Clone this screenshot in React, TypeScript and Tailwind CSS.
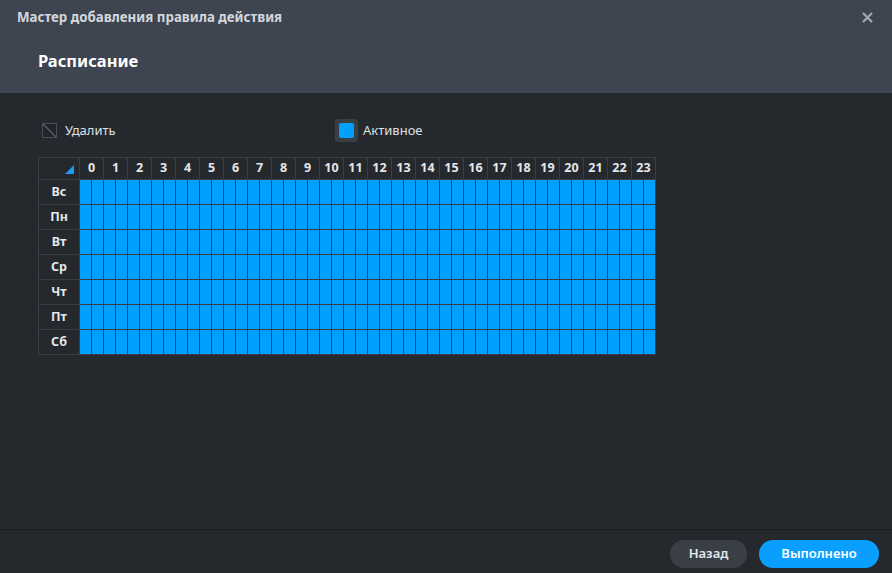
import React from "react"

const days = ["Вс", "Пн", "Вт", "Ср", "Чт", "Пт", "Сб"]
const hours = Array.from({ length: 24 }, (_, i) => i)
const halves = Array.from({ length: 48 }, (_, i) => i)

function ScheduleGrid() {
  return (
    <div className="grid grid-cols-[40px_repeat(48,11px)] gap-px bg-[#393d44] p-px w-max">
      <div className="h-[21px] bg-[#25282d] flex items-end justify-end pr-[5px] pb-[5px]">
        <svg width="9" height="9" viewBox="0 0 9 9">
          <polygon points="9,0 9,9 0,9" fill="#1a9cf0" />
        </svg>
      </div>
      {hours.map((h) => (
        <div
          key={h}
          className="col-span-2 h-[21px] bg-[#25282d] flex items-center justify-center text-[12.5px] font-bold text-[#e4e7eb]"
        >
          {h}
        </div>
      ))}
      {days.map((d) => (
        <React.Fragment key={d}>
          <div className="h-[24px] bg-[#25282d] flex items-center justify-center text-[12.5px] font-bold text-[#e4e7eb]">
            {d}
          </div>
          {halves.map((i) => (
            <div key={i} className="h-[24px] bg-[#00a0ff]" />
          ))}
        </React.Fragment>
      ))}
    </div>
  )
}

export default function App() {
  return (
    <div className="w-[892px] h-[573px] bg-[#25282d] flex flex-col font-['Noto_Sans',sans-serif] overflow-hidden">
      <div className="h-[93px] bg-[#3e4450] flex flex-col">
        <div className="h-[35px] flex items-center justify-between pl-[17px] pr-[19px]">
          <span className="text-[13.3px] font-bold text-[#d3d7dd]">Мастер добавления правила действия</span>
          <svg width="11" height="11" viewBox="0 0 11 11">
            <path d="M1 1L10 10M10 1L1 10" stroke="#a3a8b0" strokeWidth="2.2" />
          </svg>
        </div>
        <div className="pl-[38px] pt-[14px] text-[16.5px] font-bold text-white">Расписание</div>
      </div>

      <div className="flex-1 pl-[38px] pt-[26px]">
        <div className="flex items-center h-[23px]">
          <div className="flex items-center w-[297px] pl-[4px]">
            <svg width="15" height="15" viewBox="0 0 15 15">
              <rect x="0.5" y="0.5" width="14" height="14" fill="#212428" stroke="#4a4f57" />
              <path d="M1 1L14 14" stroke="#5a5f67" strokeWidth="1.2" />
            </svg>
            <span className="ml-[8px] text-[13px] text-[#dde0e4]">Удалить</span>
          </div>
          <div className="w-[23px] h-[23px] rounded-[3px] bg-[#3a3f46] flex items-center justify-center">
            <div className="w-[15px] h-[15px] rounded-[2px] bg-[#00a0ff]" />
          </div>
          <span className="ml-[5px] text-[13px] text-[#dde0e4]">Активное</span>
        </div>
        <div className="mt-[15px]">
          <ScheduleGrid />
        </div>
      </div>

      <div className="h-[44px] border-t border-[#1b1d20] flex items-start justify-end pt-[10px] pr-[13px] gap-[12px]">
        <button className="h-[28px] w-[77px] rounded-full bg-[#3a3f47] text-[13px] font-semibold text-[#e4e7eb]">
          Назад
        </button>
        <button className="h-[28px] w-[120px] rounded-full bg-[#0a9fff] text-[13px] font-semibold text-white">
          Выполнено
        </button>
      </div>
    </div>
  )
}
